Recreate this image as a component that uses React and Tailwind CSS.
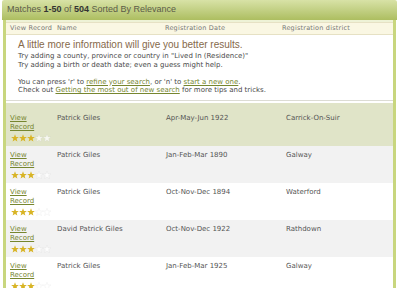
import React from "react";

const rows = [
  { name: "Patrick Giles", date: "Apr-May-Jun 1922", district: "Carrick-On-Suir", bg: "bg-[#e0e4c8]", first: true },
  { name: "Patrick Giles", date: "Jan-Feb-Mar 1890", district: "Galway", bg: "bg-[#f2f2f2]" },
  { name: "Patrick Giles", date: "Oct-Nov-Dec 1894", district: "Waterford", bg: "bg-white" },
  { name: "David Patrick Giles", date: "Oct-Nov-Dec 1922", district: "Rathdown", bg: "bg-[#f2f2f2]" },
  { name: "Patrick Giles", date: "Jan-Feb-Mar 1925", district: "Galway", bg: "bg-white" },
];

function Star({ on }) {
  return (
    <svg width="8" height="8" viewBox="0 0 10 10" className="block">
      <path
        d="M5 0.4 L6.25 3.7 L9.8 3.8 L7 6 L8 9.5 L5 7.5 L2 9.5 L3 6 L0.2 3.8 L3.75 3.7 Z"
        fill={on ? "#d8b425" : "rgba(255,255,255,0.75)"}
        stroke={on ? "none" : "rgba(200,200,200,0.35)"}
        strokeWidth="0.5"
      />
    </svg>
  );
}

export default function App() {
  return (
    <div className="w-[400px] h-[288px] overflow-hidden bg-white" style={{ fontFamily: '"DejaVu Sans", Verdana, sans-serif' }}>
      <div className="ml-[2px] w-[395px]">
        <div
          className="h-[20px] flex items-center pl-[5px] rounded-t-[2px] bg-gradient-to-b from-[#d8e2a6] to-[#adbe60] text-[#5b5b48] text-[9px]"
          style={{ fontFamily: '"Liberation Sans", Arial, sans-serif' }}
        >
          <span>
            Matches <b className="text-[#333]">1-50</b> of <b className="text-[#333]">504</b> Sorted By Relevance
          </span>
        </div>
        <div className="mx-[1px] border-x-[3px] border-[#c8d67e] bg-white">
          <div className="h-[2px] bg-[#eef2d6]" />
          <div className="h-[13px] bg-[#faf7e3] border-y border-[#e6e1c4] grid grid-cols-[47px_108px_117px_1fr] pl-[4px] items-center text-[6.5px] text-[#777] tracking-[0.2px]">
            <div>View Record</div>
            <div>Name</div>
            <div>Registration Date</div>
            <div>Registration district</div>
          </div>
          <div className="pl-[12px] pt-[4px] pb-[5px] border-b border-[#dcdcd4]">
            <div
              className="text-[10px] leading-[12px] text-[#86694a]"
              style={{ fontFamily: '"Liberation Sans", Arial, sans-serif' }}
            >
              A little more information will give you better results.
            </div>
            <div className="text-[7px] leading-[8.5px] text-[#4a4a4a] mt-[1px]">
              <div>Try adding a county, province or country in "Lived In (Residence)"</div>
              <div>Try adding a birth or death date; even a guess might help.</div>
              <div className="h-[8.5px]" />
              <div>
                You can press 'r' to <span className="text-[#76862f] underline">refine your search</span>, or 'n' to{" "}
                <span className="text-[#76862f] underline">start a new one</span>.
              </div>
              <div>
                Check out <span className="text-[#76862f] underline">Getting the most out of new search</span> for more tips and tricks.
              </div>
            </div>
          </div>
          <div className="h-[2px] bg-white" />
          {rows.map((r, i) => (
            <div
              key={i}
              className={`${r.bg} grid grid-cols-[47px_109px_120px_1fr] pl-[4px] pb-[4px] text-[7px] leading-[9.5px] text-[#555] ${r.first ? "pt-[11px]" : "pt-[5px]"}`}
            >
              <div>
                <div className="text-[#76862f] underline">View</div>
                <div className="text-[#76862f] underline">Record</div>
                <div className="flex mt-[1px] ml-[1px]">
                  <Star on />
                  <Star on />
                  <Star on />
                  <Star />
                  <Star />
                </div>
              </div>
              <div>{r.name}</div>
              <div>{r.date}</div>
              <div>{r.district}</div>
            </div>
          ))}
        </div>
      </div>
    </div>
  );
}
